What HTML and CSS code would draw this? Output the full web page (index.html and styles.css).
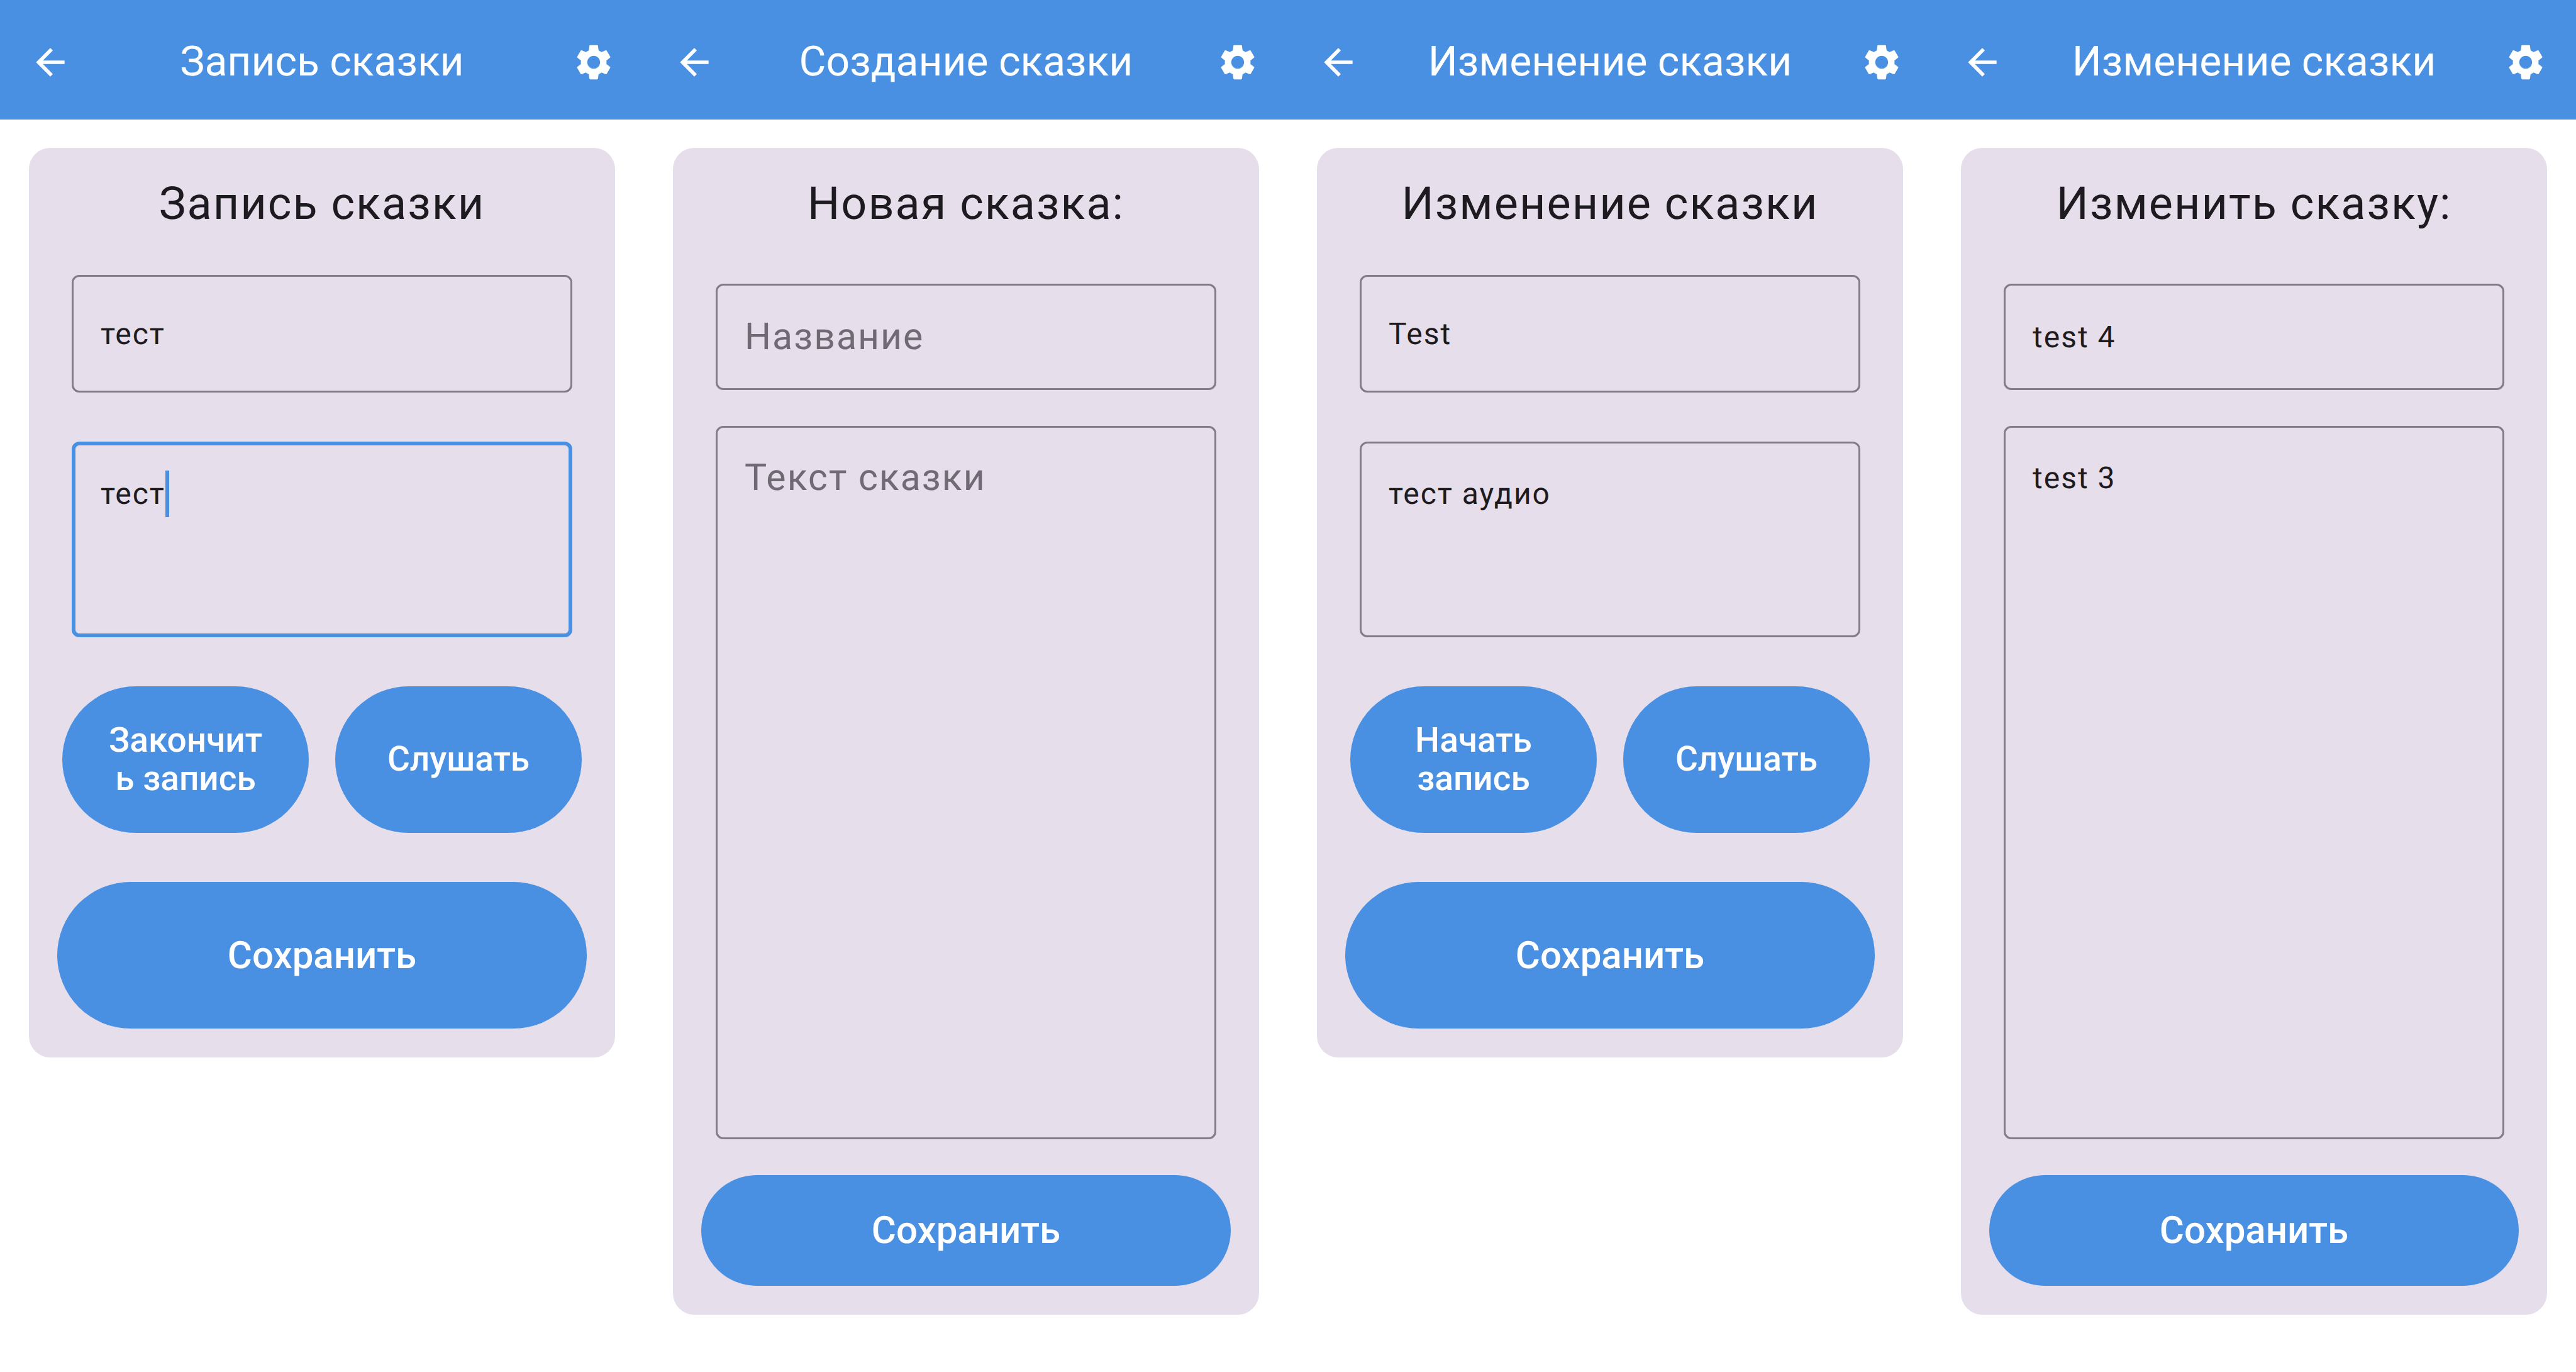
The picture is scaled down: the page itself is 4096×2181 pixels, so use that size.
FILE: index.html
```
<!DOCTYPE html>
<html lang="ru">
<head>
  <meta charset="utf-8">
  <meta name="viewport" content="width=device-width, initial-scale=1">
  <title>Сказки</title>
  <link rel="stylesheet" href="styles.css">
</head>
<body>
  <svg class="sprite" aria-hidden="true">
    <symbol id="icon-back" viewBox="0 0 24 24">
      <path d="M20 11H7.83l5.59-5.59L12 4l-8 8 8 8 1.41-1.41L7.83 13H20v-2z"/>
    </symbol>
    <symbol id="icon-settings" viewBox="0 0 24 24">
      <path d="M19.14 12.94c.04-.3.06-.61.06-.94 0-.32-.02-.64-.07-.94l2.03-1.58c.18-.14.23-.41.12-.61l-1.92-3.32c-.12-.22-.37-.29-.59-.22l-2.39.96c-.5-.38-1.03-.7-1.62-.94l-.36-2.54c-.04-.24-.24-.41-.48-.41h-3.84c-.24 0-.43.17-.47.41l-.36 2.54c-.59.24-1.13.57-1.62.94l-2.39-.96c-.22-.08-.47 0-.59.22L2.74 8.87c-.12.21-.08.47.12.61l2.03 1.58c-.05.3-.09.63-.09.94s.02.64.07.94l-2.03 1.58c-.18.14-.23.41-.12.61l1.92 3.32c.12.22.37.29.59.22l2.39-.96c.5.38 1.03.7 1.62.94l.36 2.54c.05.24.24.41.48.41h3.84c.24 0 .44-.17.47-.41l.36-2.54c.59-.24 1.13-.56 1.62-.94l2.39.96c.22.08.47 0 .59-.22l1.92-3.32c.12-.22.07-.47-.12-.61l-2.01-1.58zM12 15.6c-1.98 0-3.6-1.62-3.6-3.6s1.62-3.6 3.6-3.6 3.6 1.62 3.6 3.6-1.62 3.6-3.6 3.6z"/>
    </symbol>
  </svg>

  <main class="screens">
    <section class="screen">
      <header class="topbar">
        <button class="icon-button" type="button" aria-label="Назад"><svg class="icon"><use href="#icon-back"/></svg></button>
        <h1 class="topbar-title">Запись сказки</h1>
        <button class="icon-button" type="button" aria-label="Настройки"><svg class="icon"><use href="#icon-settings"/></svg></button>
      </header>
      <form class="card card-audio">
        <h2 class="card-title">Запись сказки</h2>
        <input class="field" type="text" aria-label="Название" value="тест">
        <div class="field-wrap">
          <textarea class="field field-focused" aria-label="Описание">тест</textarea>
          <span class="caret"></span>
        </div>
        <div class="actions">
          <button class="button button-small" type="button">Закончить запись</button>
          <button class="button button-small" type="button">Слушать</button>
        </div>
        <button class="button" type="button">Сохранить</button>
      </form>
    </section>

    <section class="screen">
      <header class="topbar">
        <button class="icon-button" type="button" aria-label="Назад"><svg class="icon"><use href="#icon-back"/></svg></button>
        <h1 class="topbar-title">Создание сказки</h1>
        <button class="icon-button" type="button" aria-label="Настройки"><svg class="icon"><use href="#icon-settings"/></svg></button>
      </header>
      <form class="card card-text">
        <h2 class="card-title">Новая сказка:</h2>
        <input class="field" type="text" aria-label="Название" placeholder="Название">
        <div class="field-wrap">
          <textarea class="field" aria-label="Текст сказки" placeholder="Текст сказки"></textarea>
        </div>
        <button class="button" type="button">Сохранить</button>
      </form>
    </section>

    <section class="screen">
      <header class="topbar">
        <button class="icon-button" type="button" aria-label="Назад"><svg class="icon"><use href="#icon-back"/></svg></button>
        <h1 class="topbar-title">Изменение сказки</h1>
        <button class="icon-button" type="button" aria-label="Настройки"><svg class="icon"><use href="#icon-settings"/></svg></button>
      </header>
      <form class="card card-audio">
        <h2 class="card-title">Изменение сказки</h2>
        <input class="field" type="text" aria-label="Название" value="Test">
        <div class="field-wrap">
          <textarea class="field" aria-label="Описание">тест аудио</textarea>
        </div>
        <div class="actions">
          <button class="button button-small" type="button">Начать запись</button>
          <button class="button button-small" type="button">Слушать</button>
        </div>
        <button class="button" type="button">Сохранить</button>
      </form>
    </section>

    <section class="screen">
      <header class="topbar">
        <button class="icon-button" type="button" aria-label="Назад"><svg class="icon"><use href="#icon-back"/></svg></button>
        <h1 class="topbar-title">Изменение сказки</h1>
        <button class="icon-button" type="button" aria-label="Настройки"><svg class="icon"><use href="#icon-settings"/></svg></button>
      </header>
      <form class="card card-text">
        <h2 class="card-title">Изменить сказку:</h2>
        <input class="field" type="text" aria-label="Название" value="test 4">
        <div class="field-wrap">
          <textarea class="field" aria-label="Текст сказки">test 3</textarea>
        </div>
        <button class="button" type="button">Сохранить</button>
      </form>
    </section>
  </main>
</body>
</html>
```
FILE: styles.css
```
:root {
  --blue: #4a90e2;
  --card: #e6dfeb;
  --ink: #1d1b20;
  --muted: #6f6a73;
  --outline: #827c87;
}

* {
  box-sizing: border-box;
}

body {
  margin: 0;
  background: #fff;
  color: var(--ink);
  font-family: Roboto, "Noto Sans", sans-serif;
  text-rendering: geometricPrecision;
}

.sprite {
  display: none;
}

.screens {
  display: grid;
  grid-template-columns: repeat(4, minmax(0, 1fr));
  align-items: start;
}

/* Top bar */
.topbar {
  display: flex;
  align-items: center;
  height: 190px;
  padding: 8px 46px 0;
  background: var(--blue);
  color: #fff;
}

.topbar-title {
  flex: 1;
  margin: 0;
  font-size: 66px;
  line-height: 80px;
  font-weight: 400;
  text-align: center;
}

.icon-button {
  display: flex;
  padding: 0;
  border: 0;
  background: none;
  color: inherit;
}

.icon {
  width: 68px;
  height: 68px;
  fill: currentColor;
}

/* Card */
.card {
  display: flex;
  flex-direction: column;
  margin: 45px 46px;
  padding: 46px 45px;
  border-radius: 34px;
  background: var(--card);
}

.card-audio {
  --input-height: 187px;
  --area-height: 311px;
  --button-height: 233px;
  gap: 78px;
}

.card-text {
  --input-height: 169px;
  --area-height: 1134px;
  --button-height: 176px;
  gap: 57px;
}

.card-title {
  margin: 0;
  font-size: 72px;
  line-height: 86px;
  font-weight: 400;
  letter-spacing: 2px;
  text-align: center;
}

.card-audio .card-title {
  margin-bottom: -8px;
}

.card-text .card-title {
  margin-bottom: 27px;
}

/* Fields */
.field {
  display: block;
  min-width: 0;
  height: var(--input-height);
  margin: 0 23px;
  padding: 0 43px;
  border: 3px solid var(--outline);
  border-radius: 12px;
  outline: 0;
  background: transparent;
  color: var(--ink);
  font: 400 48px/74px Roboto, "Noto Sans", sans-serif;
  letter-spacing: 2px;
  text-rendering: inherit;
}

.field:placeholder-shown {
  font-size: 59px;
}

.field::placeholder {
  color: var(--muted);
  opacity: 1;
}

.field-wrap {
  position: relative;
  display: grid;
  grid-template-columns: minmax(0, 1fr);
}

textarea.field {
  height: var(--area-height);
  padding-top: 43px;
  resize: none;
}

textarea.field-focused {
  padding: 40px 40px 0;
  border: 6px solid var(--blue);
}

.caret {
  position: absolute;
  top: 46px;
  left: 172px;
  width: 6px;
  height: 74px;
  background: var(--blue);
}

/* Buttons */
.actions {
  display: grid;
  grid-template-columns: repeat(2, minmax(0, 1fr));
  gap: 42px;
  padding: 0 8px;
}

.button {
  height: var(--button-height);
  padding: 0 67px;
  border: 0;
  border-radius: 117px;
  background: var(--blue);
  color: #fff;
  font: 500 60px/72px Roboto, "Noto Sans", sans-serif;
  text-rendering: inherit;
}

.button-small {
  font-size: 55px;
  line-height: 61px;
  overflow-wrap: anywhere;
}
```
